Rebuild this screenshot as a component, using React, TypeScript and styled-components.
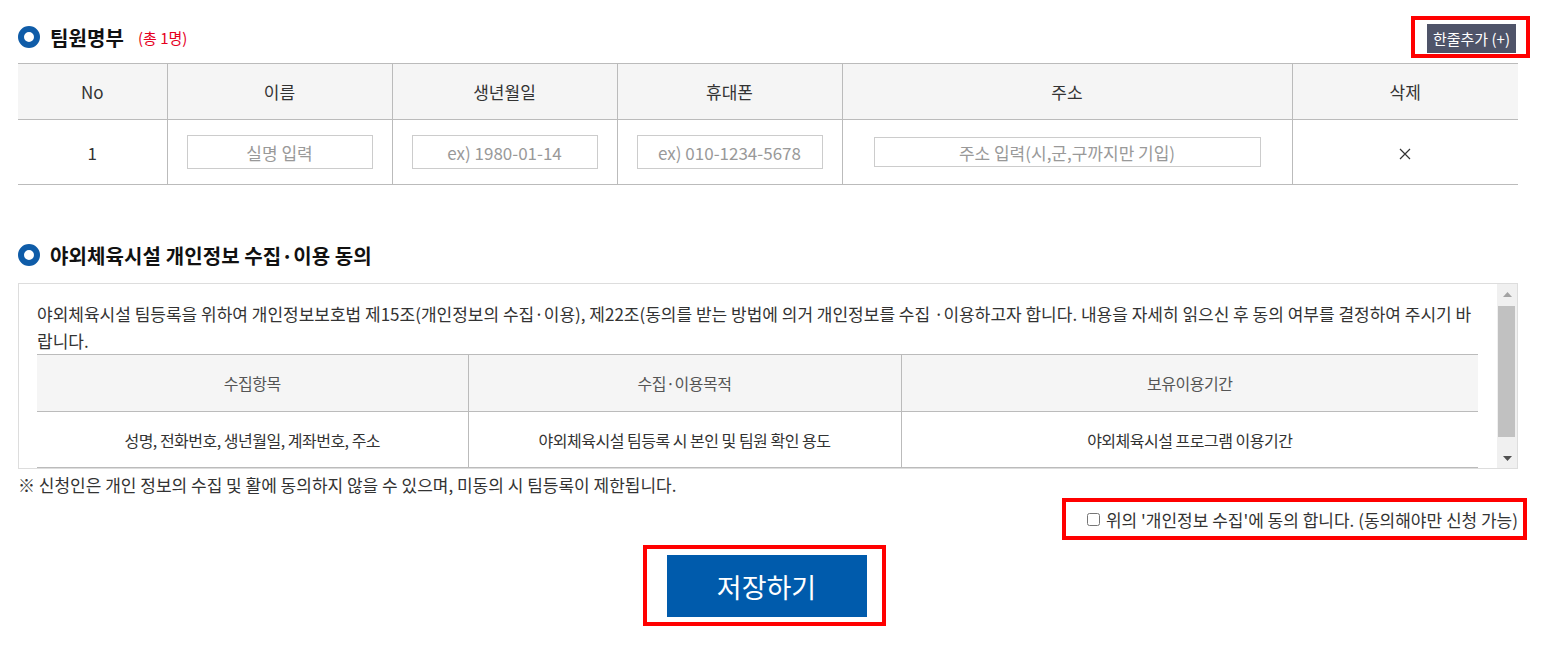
import * as React from 'react';
import styled, { createGlobalStyle } from 'styled-components';

const GlobalStyle = createGlobalStyle`
  html, body {
    margin: 0;
    padding: 0;
    background: #fff;
  }
  body {
    font-family: "Noto Sans CJK KR", "Noto Sans", sans-serif;
    color: #333;
  }
  * {
    box-sizing: border-box;
  }
`;

const Page = styled.div`
  width: 1500px;
  margin-left: 18px;
  padding-top: 16px;
  padding-bottom: 30px;
`;

const SectionHead = styled.div<{ $top?: number; $bottom?: number }>`
  display: flex;
  align-items: center;
  justify-content: space-between;
  height: ${p => (p.$top !== undefined ? 30 : 42)}px;
  margin-top: ${p => p.$top || 0}px;
  margin-bottom: ${p => p.$bottom || 0}px;
`;

const TitleWrap = styled.div`
  display: flex;
  align-items: center;
`;

const Bullet = styled.span`
  width: 22px;
  height: 22px;
  border-radius: 50%;
  border: 6px solid #0f5ca8;
  margin-right: 10px;
`;

const Title = styled.h2`
  margin: 0;
  font-size: 20px;
  font-weight: 700;
  color: #111;
  letter-spacing: 0.1px;
`;

const Count = styled.span`
  margin-left: 14px;
  font-size: 15px;
  color: #e6001e;
`;

const Marked = styled.div<{ $right?: number }>`
  border: 4px solid #ff0000;
  margin-right: ${p => p.$right || 0}px;
`;

const AddWrap = styled(Marked)`
  padding: 4px 10px 1px 12px;
  margin-right: -12px;
`;

const AddButton = styled.button`
  height: 29px;
  padding: 0 6px;
  border: 0;
  background: #4f5469;
  color: #fff;
  font-family: inherit;
  font-size: 15px;
  letter-spacing: 0;
  cursor: pointer;
`;

const Table = styled.table`
  width: 100%;
  border-collapse: collapse;
  table-layout: fixed;
  margin-top: 5px;
`;

const Th = styled.th<{ $w?: number }>`
  width: ${p => (p.$w ? `${p.$w}px` : 'auto')};
  height: 56px;
  background: #f5f5f5;
  border-top: 1px solid #bbb;
  border-bottom: 1px solid #bbb;
  border-left: 1px solid #bbb;
  font-weight: 400;
  font-size: 17px;
  color: #333;
  &:first-child {
    border-left: 0;
  }
`;

const Td = styled.td`
  height: 65px;
  text-align: center;
  border-bottom: 1px solid #bbb;
  border-left: 1px solid #bbb;
  font-size: 17px;
  &:first-child {
    border-left: 0;
  }
`;

const Input = styled.input<{ $w: number; $h: number }>`
  width: ${p => p.$w}px;
  height: ${p => p.$h}px;
  border: 1px solid #ccc;
  text-align: center;
  font-family: inherit;
  font-size: 17px;
  color: #333;
  outline: none;
  &::placeholder {
    color: #999;
  }
`;

const DeleteX = styled.button`
  border: 0;
  background: none;
  padding: 0;
  cursor: pointer;
  display: inline-flex;
`;

const ConsentBox = styled.div`
  display: flex;
  height: 186px;
  border: 1px solid #ddd;
`;

const ConsentBody = styled.div`
  flex: 1;
  min-width: 0;
  overflow: hidden;
  padding: 16px 19px 20px 18px;
`;

const ScrollBar = styled.div`
  width: 20px;
  display: flex;
  flex-direction: column;
  background: #f0f0f0;
`;

const ScrollArrow = styled.div`
  height: 20px;
  display: flex;
  align-items: center;
  justify-content: center;
`;

const ScrollTrack = styled.div`
  flex: 1;
  padding: 2px 2px 0 1px;
`;

const ScrollThumb = styled.div`
  height: 131px;
  background: #c1c1c1;
`;

const ConsentText = styled.p`
  margin: 0;
  font-size: 17px;
  line-height: 27px;
  color: #333;
  letter-spacing: 0;
`;

const InfoTable = styled.table`
  width: 100%;
  border-collapse: collapse;
  table-layout: fixed;
`;

const InfoTh = styled.th<{ $w?: number }>`
  width: ${p => (p.$w ? `${p.$w}px` : 'auto')};
  height: 57px;
  background: #f5f5f5;
  border-top: 1px solid #bbb;
  border-bottom: 1px solid #bbb;
  border-left: 1px solid #bbb;
  font-weight: 400;
  font-size: 16px;
  color: #555;
  letter-spacing: -0.5px;
  &:first-child {
    border-left: 0;
  }
`;

const InfoTd = styled.td`
  height: 56px;
  text-align: center;
  border-bottom: 1px solid #bbb;
  border-left: 1px solid #bbb;
  font-size: 16px;
  color: #333;
  letter-spacing: -0.5px;
  &:first-child {
    border-left: 0;
  }
`;

const Notice = styled.p`
  margin: 5px 0 0;
  font-size: 17px;
  line-height: 22px;
  color: #333;
  letter-spacing: 0;
`;

const AgreeRow = styled.div`
  display: flex;
  justify-content: flex-end;
  margin-top: 2px;
`;

const AgreeBox = styled(Marked)`
  height: 42px;
  padding: 0 5px 0 21px;
  display: flex;
  align-items: center;
`;

const AgreeLabel = styled.label`
  display: flex;
  align-items: center;
  gap: 6px;
  font-size: 17px;
  color: #333;
  letter-spacing: 0;
  cursor: pointer;
`;

const Check = styled.input`
  width: 13px;
  height: 13px;
  margin: 1px 0 0;
`;

const SaveRow = styled.div`
  display: flex;
  justify-content: center;
  margin-top: 5px;
  padding-right: 8px;
`;

const SaveBox = styled(Marked)`
  padding: 6px 15px 5px 20px;
`;

const SaveButton = styled.button`
  width: 200px;
  height: 62px;
  border: 0;
  background: #005bac;
  color: #fff;
  font-family: inherit;
  font-size: 27px;
  cursor: pointer;
`;

const columns = [
  { label: 'No', w: 149 },
  { label: '이름', w: 225 },
  { label: '생년월일', w: 225 },
  { label: '휴대폰', w: 225 },
  { label: '주소', w: 450 },
  { label: '삭제' },
];

export default function App() {
  const [agree, setAgree] = React.useState(false);
  return (
    <Page>
      <GlobalStyle />
      <SectionHead>
        <TitleWrap>
          <Bullet />
          <Title>팀원명부</Title>
          <Count>(총 1명)</Count>
        </TitleWrap>
        <AddWrap>
          <AddButton type="button">한줄추가 (+)</AddButton>
        </AddWrap>
      </SectionHead>

      <Table>
        <thead>
          <tr>
            {columns.map(c => (
              <Th key={c.label} $w={c.w}>
                {c.label}
              </Th>
            ))}
          </tr>
        </thead>
        <tbody>
          <tr>
            <Td>1</Td>
            <Td>
              <Input $w={186} $h={34} placeholder="실명 입력" />
            </Td>
            <Td>
              <Input $w={186} $h={34} placeholder="ex) 1980-01-14" />
            </Td>
            <Td>
              <Input $w={186} $h={34} placeholder="ex) 010-1234-5678" />
            </Td>
            <Td>
              <Input $w={387} $h={30} placeholder="주소 입력(시,군,구까지만 기입)" />
            </Td>
            <Td>
              <DeleteX type="button" aria-label="삭제">
                <svg width="12" height="12" viewBox="0 0 12 12">
                  <path d="M1 1 L11 11 M11 1 L1 11" stroke="#333" strokeWidth="1.2" />
                </svg>
              </DeleteX>
            </Td>
          </tr>
        </tbody>
      </Table>

      <SectionHead $top={55} $bottom={13}>
        <TitleWrap>
          <Bullet />
          <Title>야외체육시설 개인정보 수집·이용 동의</Title>
        </TitleWrap>
      </SectionHead>

      <ConsentBox>
        <ConsentBody>
          <ConsentText>
            야외체육시설 팀등록을 위하여 개인정보보호법 제15조(개인정보의 수집·이용), 제22조(동의를 받는 방법에 의거
            개인정보를 수집 ·이용하고자 합니다. 내용을 자세히 읽으신 후 동의 여부를 결정하여 주시기 바랍니다.
          </ConsentText>
          <InfoTable>
            <thead>
              <tr>
                <InfoTh $w={431}>수집항목</InfoTh>
                <InfoTh $w={433}>수집·이용목적</InfoTh>
                <InfoTh>보유이용기간</InfoTh>
              </tr>
            </thead>
            <tbody>
              <tr>
                <InfoTd>성명, 전화번호, 생년월일, 계좌번호, 주소</InfoTd>
                <InfoTd>야외체육시설 팀등록 시 본인 및 팀원 확인 용도</InfoTd>
                <InfoTd>야외체육시설 프로그램 이용기간</InfoTd>
              </tr>
            </tbody>
          </InfoTable>
        </ConsentBody>
        <ScrollBar>
          <ScrollArrow>
            <svg width="9" height="5" viewBox="0 0 9 5">
              <path d="M0 5 L4.5 0 L9 5 Z" fill="#a3a3a3" />
            </svg>
          </ScrollArrow>
          <ScrollTrack>
            <ScrollThumb />
          </ScrollTrack>
          <ScrollArrow>
            <svg width="9" height="5" viewBox="0 0 9 5">
              <path d="M0 0 L4.5 5 L9 0 Z" fill="#505050" />
            </svg>
          </ScrollArrow>
        </ScrollBar>
      </ConsentBox>

      <Notice>※ 신청인은 개인 정보의 수집 및 활에 동의하지 않을 수 있으며, 미동의 시 팀등록이 제한됩니다.</Notice>

      <AgreeRow>
        <AgreeBox $right={-9}>
          <AgreeLabel>
            <Check type="checkbox" checked={agree} onChange={e => setAgree(e.target.checked)} />
            위의 '개인정보 수집'에 동의 합니다. (동의해야만 신청 가능)
          </AgreeLabel>
        </AgreeBox>
      </AgreeRow>

      <SaveRow>
        <SaveBox>
          <SaveButton type="button">저장하기</SaveButton>
        </SaveBox>
      </SaveRow>
    </Page>
  );
}
